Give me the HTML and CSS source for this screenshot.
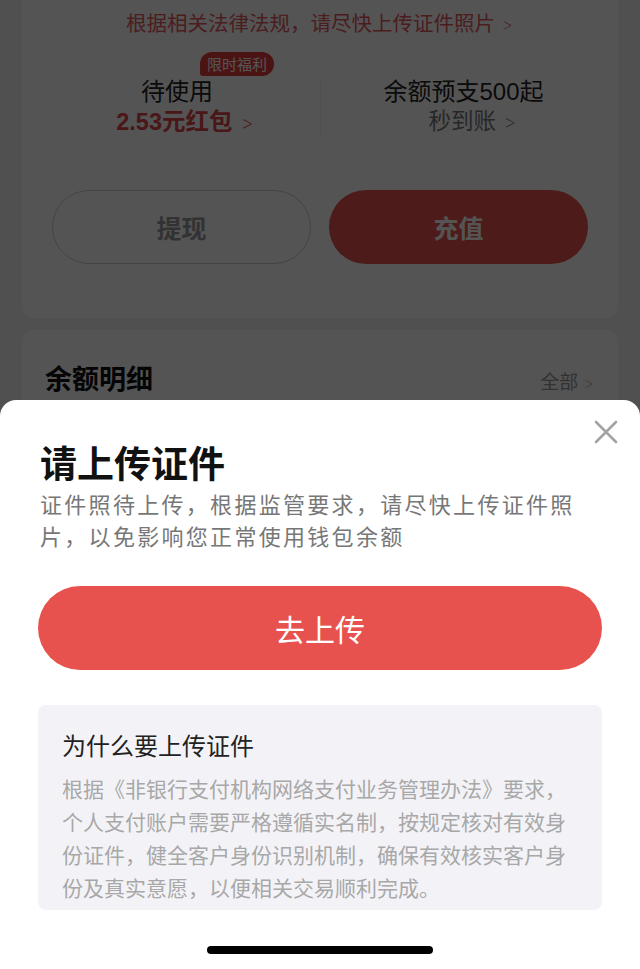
FILE: index.html
```html
<!DOCTYPE html>
<html lang="zh-CN">
<head>
    <meta charset="UTF-8">
    <meta name="viewport" content="width=device-width, initial-scale=1.0">
    <title>钱包</title>
    <link rel="stylesheet" href="styles.css">
</head>
<body>
    <div class="page">
        <div class="card wallet">
            <div class="notice">根据相关法律法规，请尽快上传证件照片 <span class="chev">&gt;</span></div>
            <div class="stats">
                <div class="stat">
                    <span class="badge">限时福利</span>
                    <div class="stat-title">待使用</div>
                    <div class="stat-sub red">2.53元红包 <span class="chev">&gt;</span></div>
                </div>
                <div class="stat">
                    <div class="stat-title">余额预支500起</div>
                    <div class="stat-sub">秒到账 <span class="chev">&gt;</span></div>
                </div>
            </div>
            <div class="actions">
                <button class="btn btn-outline">提现</button>
                <button class="btn btn-red">充值</button>
            </div>
        </div>
        <div class="card detail">
            <div class="detail-title">余额明细</div>
            <div class="detail-more">全部 <span class="chev">&gt;</span></div>
        </div>
    </div>

    <div class="mask"></div>

    <div class="sheet">
        <svg class="close" width="24" height="24" viewBox="0 0 24 24">
            <path d="M2 2 L22 22 M22 2 L2 22" stroke="#a3a3a3" stroke-width="2.6" stroke-linecap="round" fill="none"/>
        </svg>
        <h1 class="sheet-title">请上传证件</h1>
        <p class="sheet-desc">证件照待上传，根据监管要求，请尽快上传证件照片，以免影响您正常使用钱包余额</p>
        <button class="upload-btn">去上传</button>
        <div class="why">
            <h2 class="why-title">为什么要上传证件</h2>
            <p class="why-text">根据《非银行支付机构网络支付业务管理办法》要求，个人支付账户需要严格遵循实名制，按规定核对有效身份证件，健全客户身份识别机制，确保有效核实客户身份及真实意愿，以便相关交易顺利完成。</p>
        </div>
        <div class="home-bar"></div>
    </div>
</body>
</html>
```

FILE: styles.css
```css
* {
    box-sizing: border-box;
}
body {
    margin: 0;
    background: #f2f2f4;
    font-family: "Noto Sans CJK SC", "Noto Sans", sans-serif;
    height: 969px;
    overflow: hidden;
}
.page {
    padding: 0 22px;
}
.card {
    background: #fff;
    border-radius: 0 0 12px 12px;
}
.wallet {
    height: 318px;
    padding: 8px 30px 0;
}
.notice {
    text-align: center;
    font-size: 20.5px;
    line-height: 28px;
    color: #e4585c;
}
.chev {
    font-family: "DejaVu Sans", sans-serif;
    font-weight: 300;
    font-size: 0.85em;
    transform: scaleX(0.7);
    display: inline-block;
}
.stats {
    display: grid;
    grid-template-columns: 1fr 1fr;
    margin: 39px -18px 0;
    font-family: "Liberation Sans", "Noto Sans CJK SC", sans-serif;
}
.stat {
    position: relative;
    text-align: center;
}
.stat + .stat {
    border-left: 1px solid #eee;
}
.stat-title {
    font-size: 24px;
    line-height: 28px;
    color: #222;
}
.stat-sub {
    font-size: 22.5px;
    line-height: 28px;
    margin-top: 2px;
    color: #777;
    padding-left: 20px;
}
.stat-sub.red {
    color: #e0454a;
    font-size: 23.5px;
    font-weight: bold;
    padding-left: 18px;
}
.badge {
    position: absolute;
    left: 166px;
    top: -26px;
    background: #e53c3c;
    color: #fff;
    font-family: "Noto Sans CJK SC", sans-serif;
    font-size: 15px;
    line-height: 24px;
    padding: 0 7px;
    border-radius: 12px 12px 12px 3px;
}
.actions {
    display: grid;
    grid-template-columns: 1fr 1fr;
    gap: 18px;
    margin-top: 53px;
}
.btn {
    height: 74px;
    border-radius: 37px;
    font-family: inherit;
    font-size: 25px;
    font-weight: bold;
}
.btn-outline {
    background: #fff;
    border: 1px solid #ccc;
    color: #999;
}
.btn-red {
    background: #e8524e;
    border: none;
    color: #fff;
}
.detail {
    margin-top: 12px;
    height: 120px;
    border-radius: 12px;
    display: flex;
    justify-content: space-between;
    align-items: flex-start;
    padding: 28px 22px 0 23px;
}
.detail-title {
    font-size: 27px;
    font-weight: bold;
    color: #111;
}
.detail-more {
    font-size: 19px;
    color: #999;
    padding-top: 9px;
}
.mask {
    position: fixed;
    inset: 0;
    background: rgba(0, 0, 0, 0.67);
}
.sheet {
    position: fixed;
    left: 0;
    right: 0;
    top: 400px;
    bottom: 0;
    background: #fff;
    border-radius: 16px 16px 0 0;
    padding: 39px 38px 0;
}
.close {
    position: absolute;
    right: 22px;
    top: 20px;
}
.sheet-title {
    margin: 0 0 0 2px;
    font-size: 37px;
    line-height: 46px;
    font-weight: bold;
    color: #111;
}
.sheet-desc {
    margin: 2px 0 0 2px;
    font-size: 22px;
    line-height: 32px;
    letter-spacing: 2.3px;
    color: #777;
    padding-right: 20px;
}
.upload-btn {
    display: block;
    width: 100%;
    height: 84px;
    margin-top: 35px;
    border: none;
    border-radius: 42px;
    background: #e8524e;
    color: #fff;
    font-family: inherit;
    font-size: 30px;
}
.why {
    margin-top: 35px;
    background: #f3f3f7;
    border-radius: 8px;
    padding: 24px 24px 20px;
    height: 205px;
}
.why-title {
    margin: 0;
    font-size: 24px;
    line-height: 32px;
    font-weight: normal;
    color: #222;
}
.why-text {
    margin: 11px 0 0;
    font-size: 21px;
    line-height: 33px;
    color: #a8a8a8;
}
.home-bar {
    position: absolute;
    left: 207px;
    bottom: 15px;
    width: 226px;
    height: 8px;
    border-radius: 4px;
    background: #000;
}
```
